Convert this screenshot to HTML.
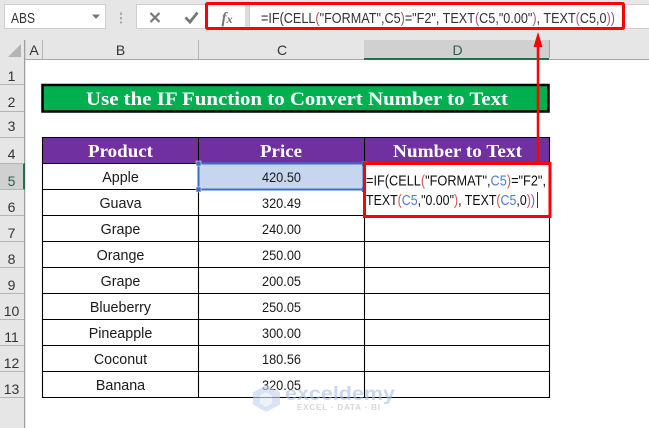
<!DOCTYPE html>
<html><head><meta charset="utf-8"><style>
html,body{margin:0;padding:0;background:#fff;overflow:hidden}
svg{display:block}
text{font-family:"Liberation Sans",sans-serif;white-space:pre}
.s{font-family:"Liberation Serif",serif;font-weight:bold;fill:#fff}
.c{font-size:14.3px;fill:#1a1a1a;text-anchor:middle}
.n{font-size:14px;fill:#1a1a1a;text-anchor:middle}
.h{font-size:14px;fill:#333;text-anchor:middle}
</style></head><body>
<svg width="649" height="428" viewBox="0 0 649 428" xmlns="http://www.w3.org/2000/svg">
<rect width="649" height="428" fill="#fff"/>
<rect width="649" height="40" fill="#e6e6e6"/>
<rect x="0" y="40" width="649" height="19.5" fill="#e6e6e6"/>
<rect x="0" y="40" width="24.5" height="388" fill="#e6e6e6"/>
<!-- name box -->
<rect x="4.500" y="4.500" width="101" height="24" fill="#fff" stroke="#cfcfcf"/>
<text x="11" y="23" font-size="14.500" fill="#333" textLength="24" lengthAdjust="spacingAndGlyphs">ABS</text>
<path d="M92 14.500h8l-4 4.500z" fill="#777"/>
<path d="M121 12.500v2.500M121 17v2.500M121 21.500v2" stroke="#a8a8a8" stroke-width="2"/>
<!-- buttons -->
<rect x="136.500" y="4.500" width="70" height="24" fill="#fff" stroke="#cfcfcf"/>
<path d="M150.500 13l9 9M159.500 13l-9 9" stroke="#777" stroke-width="2.200"/>
<path d="M185.500 17.500l4.500 4.500 7.500-9.500" stroke="#777" stroke-width="2.800" fill="none"/>
<rect x="207" y="4.500" width="38" height="24" fill="#fff"/>
<text x="221.500" y="23" font-size="15.500" font-style="italic" font-weight="bold" fill="#777" style="font-family:'Liberation Serif',serif">f<tspan font-size="12">x</tspan></text>
<rect x="245" y="4" width="4" height="25" fill="#dcdcdc"/>
<rect x="249.500" y="4.500" width="400" height="24" fill="#fff" stroke="#cfcfcf"/>
<text x="261" y="23" font-size="14.500" fill="#333" textLength="354" lengthAdjust="spacingAndGlyphs">=IF(CELL<tspan fill="#c0504d">(</tspan>"FORMAT",C5<tspan fill="#c0504d">)</tspan>="F2", TEXT<tspan fill="#b0588f">(</tspan>C5,"0.00"<tspan fill="#b0588f">)</tspan>, TEXT<tspan fill="#b0588f">(</tspan>C5,0<tspan fill="#b0588f">)</tspan><tspan fill="#6a5fb0">)</tspan></text>
<!-- column headers -->
<path d="M24.500 40v20M42.500 40v19M198.500 40v19M364.500 40v19" stroke="#b5b5b5" fill="none"/>
<path d="M21 44v13H8z" fill="#b4b4b4"/>
<rect x="364" y="40" width="185" height="18" fill="#d0d0d0"/>
<rect x="364" y="58" width="185" height="2" fill="#217346"/>
<path d="M549.500 40v18" stroke="#a8a8a8"/>
<rect x="24" y="59" width="340" height="1" fill="#a8a8a8"/>
<rect x="549" y="59" width="100" height="1" fill="#a8a8a8"/>
<text class="h" x="34" y="55">A</text>
<text class="h" x="120.500" y="55">B</text>
<text class="h" x="282" y="55">C</text>
<text class="h" x="457.500" y="55" style="fill:#2f5f4a">D</text>
<!-- row headers -->
<rect x="24" y="40" width="1.300" height="388" fill="#a0a0a0"/>
<rect x="0" y="163" width="24" height="26.500" fill="#d0d0d0"/>
<rect x="23" y="163" width="2" height="26.500" fill="#217346"/>
<path d="M0 84.500h24M0 111.500h24M0 137.500h24M0 163.500h24M0 189.500h24M0 215.500h24M0 241.500h24M0 267.500h24M0 293.500h24M0 319.500h24M0 345.500h24M0 371.500h24M0 397.500h24" stroke="#b5b5b5"/>
<text class="h" x="11.500" y="81">1</text>
<text class="h" x="11.500" y="107">2</text>
<text class="h" x="11.500" y="131">3</text>
<text class="h" x="11.500" y="159">4</text>
<text class="h" x="11.500" y="186" style="fill:#2f5f4a">5</text>
<text class="h" x="11.500" y="212">6</text>
<text class="h" x="11.500" y="238">7</text>
<text class="h" x="11.500" y="264">8</text>
<text class="h" x="11.500" y="290">9</text>
<text class="h" x="11.500" y="316">10</text>
<text class="h" x="11.500" y="342">11</text>
<text class="h" x="11.500" y="368">12</text>
<text class="h" x="11.500" y="394">13</text>
<!-- title -->
<rect x="42.500" y="85" width="506" height="26.500" fill="#00b050" stroke="#000" stroke-width="2.500"/>
<text class="s" x="86" y="105" font-size="18.500" textLength="422" lengthAdjust="spacingAndGlyphs">Use the IF Function to Convert Number to Text</text>
<!-- table -->
<rect x="42.500" y="137.500" width="507" height="26" fill="#7030a0"/>
<text class="s" x="88" y="157" font-size="18" textLength="65" lengthAdjust="spacingAndGlyphs">Product</text>
<text class="s" x="260" y="157" font-size="18" textLength="42" lengthAdjust="spacingAndGlyphs">Price</text>
<text class="s" x="393" y="157" font-size="18" textLength="129" lengthAdjust="spacingAndGlyphs">Number to Text</text>
<rect x="199" y="164" width="165" height="25" fill="#c6d6ef"/>
<path d="M42.500 137.500H549.500V397.500H42.500ZM198.500 137.500V397.500M364.500 137.500V397.500M42.500 163.500H549.500M42.500 189.500H549.500M42.500 215.500H549.500M42.500 241.500H549.500M42.500 267.500H549.500M42.500 293.500H549.500M42.500 319.500H549.500M42.500 345.500H549.500M42.500 371.500H549.500" fill="none" stroke="#000" stroke-width="1.100"/>
<g>
<text class="c" x="120.500" y="182">Apple</text>
<text class="c" x="120.500" y="208">Guava</text>
<text class="c" x="120.500" y="234">Grape</text>
<text class="c" x="120.500" y="260">Orange</text>
<text class="c" x="120.500" y="286">Grape</text>
<text class="c" x="120.500" y="312">Blueberry</text>
<text class="c" x="120.500" y="338">Pineapple</text>
<text class="c" x="120.500" y="364">Coconut</text>
<text class="c" x="120.500" y="390">Banana</text>
<text class="n" x="281.500" y="182" textLength="39" lengthAdjust="spacingAndGlyphs">420.50</text>
<text class="n" x="281.500" y="208" textLength="39" lengthAdjust="spacingAndGlyphs">320.49</text>
<text class="n" x="281.500" y="234" textLength="39" lengthAdjust="spacingAndGlyphs">240.00</text>
<text class="n" x="281.500" y="260" textLength="39" lengthAdjust="spacingAndGlyphs">250.00</text>
<text class="n" x="281.500" y="286" textLength="39" lengthAdjust="spacingAndGlyphs">200.05</text>
<text class="n" x="281.500" y="312" textLength="39" lengthAdjust="spacingAndGlyphs">250.05</text>
<text class="n" x="281.500" y="338" textLength="39" lengthAdjust="spacingAndGlyphs">300.00</text>
<text class="n" x="281.500" y="364" textLength="39" lengthAdjust="spacingAndGlyphs">180.56</text>
<text class="n" x="281.500" y="390" textLength="39" lengthAdjust="spacingAndGlyphs">320.05</text>
</g>
<!-- selection -->
<rect x="198.500" y="163.500" width="165" height="26" fill="none" stroke="#3f6fc4" stroke-width="2"/>
<rect x="196" y="161" width="5" height="5" fill="#3f6fc4" stroke="#fff" stroke-width=".5"/>
<rect x="362" y="161" width="5" height="5" fill="#3f6fc4"/>
<rect x="196" y="187" width="5" height="5" fill="#3f6fc4" stroke="#fff" stroke-width=".5"/>
<rect x="362" y="187" width="5" height="5" fill="#3f6fc4"/>
<!-- editing cell -->
<rect x="364.500" y="163.500" width="185" height="53" fill="#fff"/>
<text x="366" y="185.500" font-size="14.500" fill="#111" textLength="180" lengthAdjust="spacingAndGlyphs">=IF(CELL<tspan fill="#d9534f">(</tspan>"FORMAT",<tspan fill="#4a7fd8">C5</tspan><tspan fill="#d9534f">)</tspan>="F2",</text>
<text x="366" y="205" font-size="14.500" fill="#111" textLength="169" lengthAdjust="spacingAndGlyphs">TEXT<tspan fill="#d9534f">(</tspan><tspan fill="#4a7fd8">C5</tspan>,"0.00"<tspan fill="#d9534f">)</tspan>, TEXT<tspan fill="#d9534f">(</tspan><tspan fill="#4a7fd8">C5</tspan>,0<tspan fill="#d9534f">)</tspan><tspan fill="#8a5fb0">)</tspan></text>
<path d="M537.500 192v16" stroke="#333"/>
<!-- watermark -->
<g opacity=".62">
<path d="M266 385l14 7.500v12l-14 7.500-13-7.500v-12z" fill="#c2d2ec"/>
<path d="M266 392l-6 3.500v8l6 3.500 6-3.500v-8z" fill="#e3ebf7"/>
<text x="285" y="400" font-size="19.500" font-weight="bold" fill="#a9c1e8" textLength="110" lengthAdjust="spacingAndGlyphs">exceldemy</text>
<text x="297" y="410" font-size="8" font-weight="bold" fill="#c0c0c0" textLength="83" lengthAdjust="spacing">EXCEL · DATA · BI</text>
</g>
<!-- red annotations -->
<rect x="206.500" y="3.500" width="417" height="25" rx="1" fill="none" stroke="#f00" stroke-width="3"/>
<rect x="364.500" y="163.500" width="185.500" height="53" fill="none" stroke="#f00" stroke-width="3"/>
<path d="M538 163V44" stroke="#f00" stroke-width="2.500"/>
<path d="M538 32l-4.500 15h9z" fill="#f00"/>
</svg>
</body></html>
